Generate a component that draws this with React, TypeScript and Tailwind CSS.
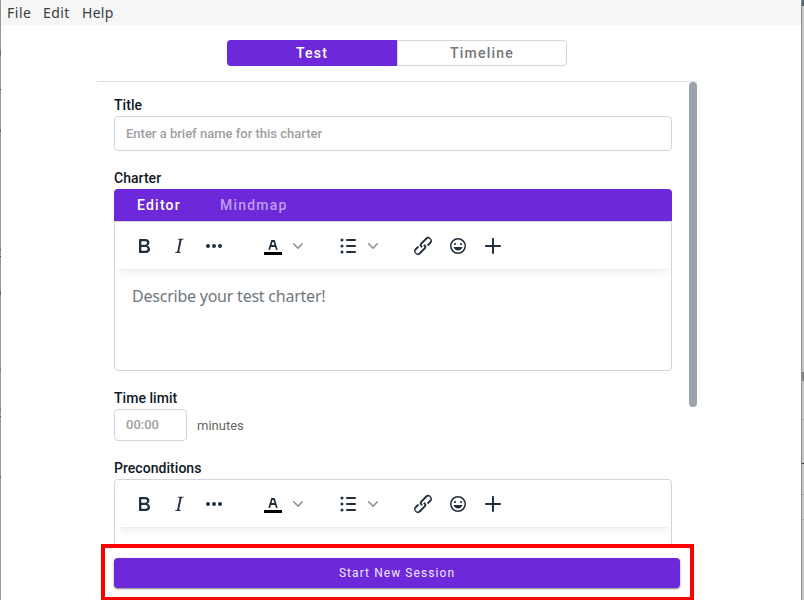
import React from "react";

const icons = {
  bold: "M7.8 19c-.3 0-.5 0-.6-.2l-.2-.5V5.7c0-.2 0-.4.2-.5l.6-.2h5c1.5 0 2.7.3 3.5 1 .7.6 1.1 1.4 1.1 2.5a3 3 0 0 1-.6 1.9c-.4.6-1 1-1.6 1.2.4.1.9.3 1.3.6s.8.7 1 1.2c.4.4.5 1 .5 1.6 0 1.3-.4 2.3-1.3 3-.8.7-2.1 1-3.8 1H7.8Zm5-8.3c.6 0 1.2-.1 1.6-.5.4-.3.6-.7.6-1.3 0-1.1-.8-1.7-2.3-1.7H9.3v3.5h3.4Zm.5 6c.7 0 1.3-.1 1.7-.4.4-.4.6-.9.6-1.5s-.2-1-.7-1.4c-.4-.3-1-.4-2-.4H9.4v3.8h4Z",
  italic: "m16.7 4.7-.1.9h-.3c-.6 0-1 0-1.4.3-.3.3-.4.6-.5 1.1l-2.1 9.8v.6c0 .5.4.8 1.4.8h.2l-.2.8H8l.2-.8h.2c1.1 0 1.8-.5 2-1.5l2-9.8.1-.5c0-.6-.4-.8-1.4-.8h-.3l.2-.9h5.8Z",
  more: "M6 10a2 2 0 1 0 0 4 2 2 0 0 0 0-4Zm12 0a2 2 0 1 0 0 4 2 2 0 0 0 0-4Zm-6 0a2 2 0 1 0 0 4 2 2 0 0 0 0-4Z",
  color: "M8.7 16h-.8a.5.5 0 0 1-.5-.6l2.7-9c.1-.3.3-.4.5-.4h2.8c.2 0 .4.1.5.4l2.7 9a.5.5 0 0 1-.5.6h-.8a.5.5 0 0 1-.4-.4l-.7-2.2c0-.3-.3-.4-.5-.4h-3.4c-.2 0-.4.1-.5.4l-.7 2.2c0 .3-.2.4-.4.4Zm2.6-7.6-.6 2a.5.5 0 0 0 .5.6h1.6a.5.5 0 0 0 .5-.6l-.6-2c0-.3-.3-.4-.5-.4h-.4c-.2 0-.4.1-.5.4Z",
  list: "M11 5h8a1 1 0 0 1 0 2h-8a1 1 0 0 1 0-2Zm0 6h8a1 1 0 0 1 0 2h-8a1 1 0 0 1 0-2Zm0 6h8a1 1 0 0 1 0 2h-8a1 1 0 0 1 0-2ZM6 4.5a1.5 1.5 0 1 1 0 3 1.5 1.5 0 0 1 0-3Zm0 6a1.5 1.5 0 1 1 0 3 1.5 1.5 0 0 1 0-3Zm0 6a1.5 1.5 0 1 1 0 3 1.5 1.5 0 0 1 0-3Z",
  link: "M6.2 12.3a1 1 0 0 1 1.4 1.4l-2 2a2 2 0 1 0 2.6 2.8l4.8-4.8a1 1 0 0 0 0-1.4 1 1 0 1 1 1.4-1.3 2.9 2.9 0 0 1 0 4L9.6 20a3.9 3.9 0 0 1-5.5-5.5l2-2Zm11.6-.6a1 1 0 0 1-1.4-1.4l2-2a2 2 0 1 0-2.6-2.8L11 10.3a1 1 0 0 0 0 1.4A1 1 0 1 1 9.6 13a2.9 2.9 0 0 1 0-4L14.4 4a3.9 3.9 0 0 1 5.5 5.5l-2 2Z",
  emoji: "M9 11c.6 0 1-.4 1-1s-.4-1-1-1a1 1 0 0 0-1 1c0 .6.4 1 1 1Zm6 0c.6 0 1-.4 1-1s-.4-1-1-1a1 1 0 0 0-1 1c0 .6.4 1 1 1Zm-3 5.5c2.1 0 4-1.5 4.4-3.5H7.6c.5 2 2.3 3.5 4.4 3.5ZM12 4a8 8 0 1 0 0 16 8 8 0 0 0 0-16Zm0 14.5a6.5 6.5 0 1 1 0-13 6.5 6.5 0 0 1 0 13Z",
  plus: "M12 4c.5 0 1 .4 1 .9V11h6a1 1 0 0 1 .1 2H13v6a1 1 0 0 1-2 .1V13H5a1 1 0 0 1-.1-2H11V5c0-.6.4-1 1-1Z",
};

function Icon({ name }: { name: keyof typeof icons }) {
  return (
    <svg width="24" height="24" viewBox="0 0 24 24" className="shrink-0" fill="#222f3e" fillRule="evenodd">
      {name === "color" && <path d="M3 18h18v3H3z" fill="#000" />}
      <path d={icons[name]} />
    </svg>
  );
}

function Chevron() {
  return (
    <svg width="10" height="10" viewBox="0 0 10 10" className="ml-2 shrink-0" fill="#222f3e" fillOpacity="0.5">
      <path d="M8.7 2.2c.3-.3.8-.3 1 0 .4.4.4.9 0 1.2L5.7 7.8c-.3.3-.9.3-1.2 0L.2 3.4a.8.8 0 0 1 0-1.2c.3-.3.8-.3 1.1 0L5 6l3.7-3.8Z" />
    </svg>
  );
}

function Toolbar() {
  return (
    <div className="px-px">
      <div className="flex h-[47px] items-start bg-white pt-3 pl-4 shadow-[0_2px_2px_-2px_rgba(34,47,62,0.1),0_8px_8px_-4px_rgba(34,47,62,0.07)]">
        <div className="flex gap-[11px]">
          <Icon name="bold" />
          <Icon name="italic" />
          <Icon name="more" />
        </div>
        <div className="ml-[35px] flex items-center">
          <Icon name="color" />
          <Chevron />
        </div>
        <div className="ml-[33px] flex items-center">
          <Icon name="list" />
          <Chevron />
        </div>
        <div className="ml-[33px] flex gap-[11px]">
          <Icon name="link" />
          <Icon name="emoji" />
          <Icon name="plus" />
        </div>
      </div>
    </div>
  );
}

function Label({ children }: { children: React.ReactNode }) {
  return <div className="h-[22px] text-sm leading-[22px] font-medium tracking-[0.04px] text-gray-900">{children}</div>;
}

export default function App() {
  return (
    <div className="relative flex h-[600px] w-[804px] overflow-hidden bg-white font-[Roboto,sans-serif]">
      <div className="flex w-px flex-col bg-[#969696]">
        <div className="mt-[50px] h-[6px] bg-[#65707a]" />
        <div className="mt-[33px] h-px bg-[#444]" />
        <div className="mt-[39px] h-[3px] bg-[#656b70]" />
        <div className="mt-[117px] h-px bg-[#34499a]" />
        <div className="mt-[6px] h-px bg-[#34499a]" />
        <div className="mt-[34px] h-[4px] bg-[#606a72]" />
        <div className="mt-[74px] h-px bg-[#555]" />
        <div className="mt-[39px] h-px bg-[#555]" />
        <div className="mt-[6px] h-px bg-[#555]" />
        <div className="mt-[59px] h-[2px] bg-[#606a72]" />
      </div>
      <div className="flex w-[800px] flex-col">
        <nav className="flex h-[25px] shrink-0 items-center gap-3 bg-[#f6f6f6] pl-[6px] font-['Noto_Sans',sans-serif] text-[14px] text-[#3c3c3c]">
          <span className="w-6 tracking-[0.5px]">File</span>
          <span className="w-[27px] tracking-[0.4px]">Edit</span>
          <span className="tracking-[0.3px]">Help</span>
        </nav>
        <div className="mt-[15px] ml-[226px] flex h-[26px] w-[340px] shrink-0 text-sm leading-[26px] font-medium tracking-[1.25px]">
          <div className="w-[170px] rounded-l bg-[#6d28d9] text-center text-white">Test</div>
          <div className="w-[170px] rounded-r border border-gray-300 text-center leading-[25px] text-[#757575]">Timeline</div>
        </div>
        <main className="mt-[15px] ml-[96px] flex h-[463px] w-[600px] shrink-0 justify-between overflow-hidden border-t border-[#dedfe1] pl-[17px]">
          <div className="w-[558px] pt-3">
            <Label>Title</Label>
            <div className="h-[35px] rounded border border-gray-300 pl-[11px] text-[13px] leading-[33px] font-medium text-[#a0a0a0]">
              Enter a brief name for this charter
            </div>
            <div className="mt-4">
              <Label>Charter</Label>
            </div>
            <div className="flex h-8 gap-[39px] rounded-t bg-[#6d28d9] pl-[23px] text-sm leading-8 font-medium tracking-[1.22px] text-white">
              <span>Editor</span>
              <span className="text-[#bf9df0]">Mindmap</span>
            </div>
            <div className="h-[150px] rounded-b border border-gray-300">
              <Toolbar />
              <div className="pt-[15px] pl-[17px] font-['Noto_Sans',sans-serif] text-[16px] leading-6 tracking-[-0.23px] text-[#6f7780]">
                Describe your test charter!
              </div>
            </div>
            <div className="mt-4">
              <Label>Time limit</Label>
            </div>
            <div className="flex h-8">
              <div className="h-8 w-[73px] rounded border border-gray-300 pl-[11px] text-[13px] leading-[30px] font-medium text-[#a0a0a0]">00:00</div>
              <span className="ml-[10px] text-[13px] leading-[33px] text-[#666]">minutes</span>
            </div>
            <div className="mt-4">
              <Label>Preconditions</Label>
            </div>
            <div className="h-[150px] rounded border border-gray-300">
              <Toolbar />
            </div>
          </div>
          <div className="h-[325px] w-2 rounded bg-[#9ca3af]" />
        </main>
        <footer className="mt-[14px] ml-[113px] h-[30px] w-[566px] shrink-0 rounded bg-[#6d28d9] text-center text-xs leading-[30px] tracking-[1.07px] text-[#f0e9fb] shadow-[0_1px_2px_rgba(0,0,0,0.5)]">
          Start New Session
        </footer>
      </div>
      <div className="w-px bg-[#8c8c8c]" />
      <div className="flex w-[2px] flex-col bg-[#c6c6c6]">
        <div className="h-[6px] bg-[#53616b]" />
        <div className="mt-[366px] h-[9px] bg-[#858585]" />
        <div className="mt-[38px] h-px bg-[#aaa]" />
        <div className="mt-[43px] h-px bg-[#333]" />
        <div className="mt-[30px] h-px bg-[#aaa]" />
        <div className="mt-[24px] h-px bg-[#aaa]" />
      </div>
      <div className="absolute top-[544px] left-[101px] h-[57px] w-[593px] border-4 border-[#ff0000]" />
    </div>
  );
}
